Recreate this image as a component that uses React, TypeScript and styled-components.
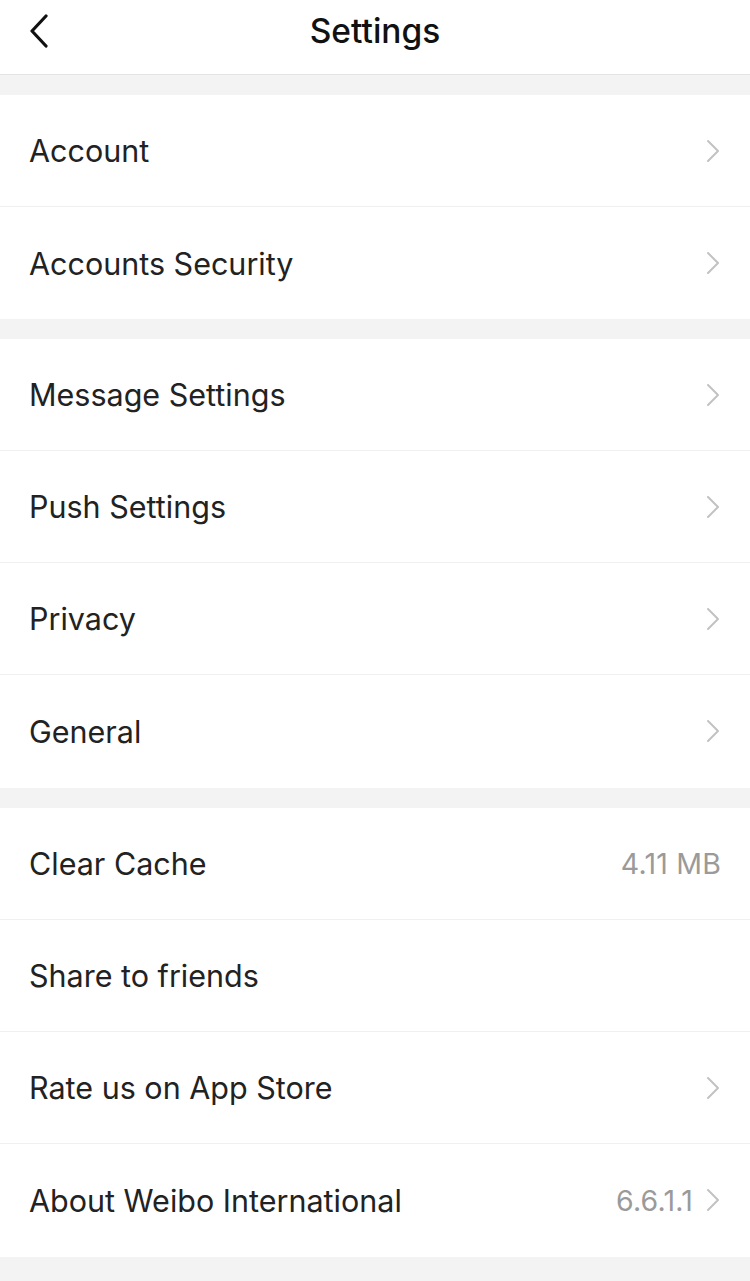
import React from 'react';
import styled, { createGlobalStyle } from 'styled-components';

type Item = {
  label: string;
  value?: string;
  arrow?: boolean;
};

const groups: Item[][] = [
  [
    { label: 'Account', arrow: true },
    { label: 'Accounts Security', arrow: true },
  ],
  [
    { label: 'Message Settings', arrow: true },
    { label: 'Push Settings', arrow: true },
    { label: 'Privacy', arrow: true },
    { label: 'General', arrow: true },
  ],
  [
    { label: 'Clear Cache', value: '4.11 MB' },
    { label: 'Share to friends' },
    { label: 'Rate us on App Store', arrow: true },
    { label: 'About Weibo International', value: '6.6.1.1', arrow: true },
  ],
];

const Chevron: React.FC = () => (
  <ChevronSvg viewBox="0 0 16 24" width="16" height="24">
    <path d="M3 2 L13 12 L3 22" fill="none" stroke="#c2c2c2" strokeWidth="2" strokeLinecap="round" strokeLinejoin="round" />
  </ChevronSvg>
);

const BackIcon: React.FC = () => (
  <svg viewBox="0 0 20 34" width="20" height="34">
    <path d="M17 2 L3 17 L17 32" fill="none" stroke="#111" strokeWidth="3.2" strokeLinecap="round" strokeLinejoin="round" />
  </svg>
);

export default function App() {
  return (
    <>
      <GlobalStyle />
      <Page>
        <Header>
          <BackButton>
            <BackIcon />
          </BackButton>
          <Title>Settings</Title>
        </Header>

        {groups.map((group, gi) => (
          <Group key={gi} $extra={group.length > 2 ? 1 : 0}>
            {group.map((item) => (
              <Row key={item.label}>
                <Label>{item.label}</Label>
                <Right>
                  {item.value && <Value>{item.value}</Value>}
                  {item.arrow && <Chevron />}
                </Right>
              </Row>
            ))}
          </Group>
        ))}
      </Page>
    </>
  );
}

const GlobalStyle = createGlobalStyle`
  html, body {
    margin: 0;
    padding: 0;
    background: #f3f3f3;
  }
  body {
    font-family: Inter, "Noto Sans", "Liberation Sans", sans-serif;
    -webkit-font-smoothing: antialiased;
  }
`;

const Page = styled.div`
  width: 750px;
  min-height: 1281px;
  background: #f3f3f3;
  display: flex;
  flex-direction: column;
  gap: 20px;
  padding-bottom: 20px;
  box-sizing: border-box;
`;

const Header = styled.div`
  position: relative;
  height: 74px;
  background: #fff;
  border-bottom: 1px solid #e4e4e4;
  display: flex;
  align-items: center;
  justify-content: center;
`;

const BackButton = styled.div`
  position: absolute;
  left: 29px;
  top: 14px;
  display: flex;
`;

const Title = styled.div`
  font-size: 33.5px;
  font-weight: 500;
  color: #111;
  margin-top: -12px;
`;

const Group = styled.div<{ $extra: number }>`
  background: #fff;
  display: flex;
  flex-direction: column;
  padding-bottom: ${(p) => p.$extra}px;
`;

const Row = styled.div`
  height: 112px;
  box-sizing: border-box;
  padding: 0 29px 0 29px;
  display: flex;
  align-items: center;
  justify-content: space-between;
  border-bottom: 1px solid #f0f0f0;

  &:last-child {
    border-bottom: none;
  }
`;

const Label = styled.div`
  font-size: 30.5px;
  color: #222;
`;

const Right = styled.div`
  display: flex;
  align-items: center;
  gap: 12px;
`;

const Value = styled.div`
  font-size: 28.5px;
  color: #9a9a9a;
  letter-spacing: 0.2px;
`;

const ChevronSvg = styled.svg`
  display: block;
`;
